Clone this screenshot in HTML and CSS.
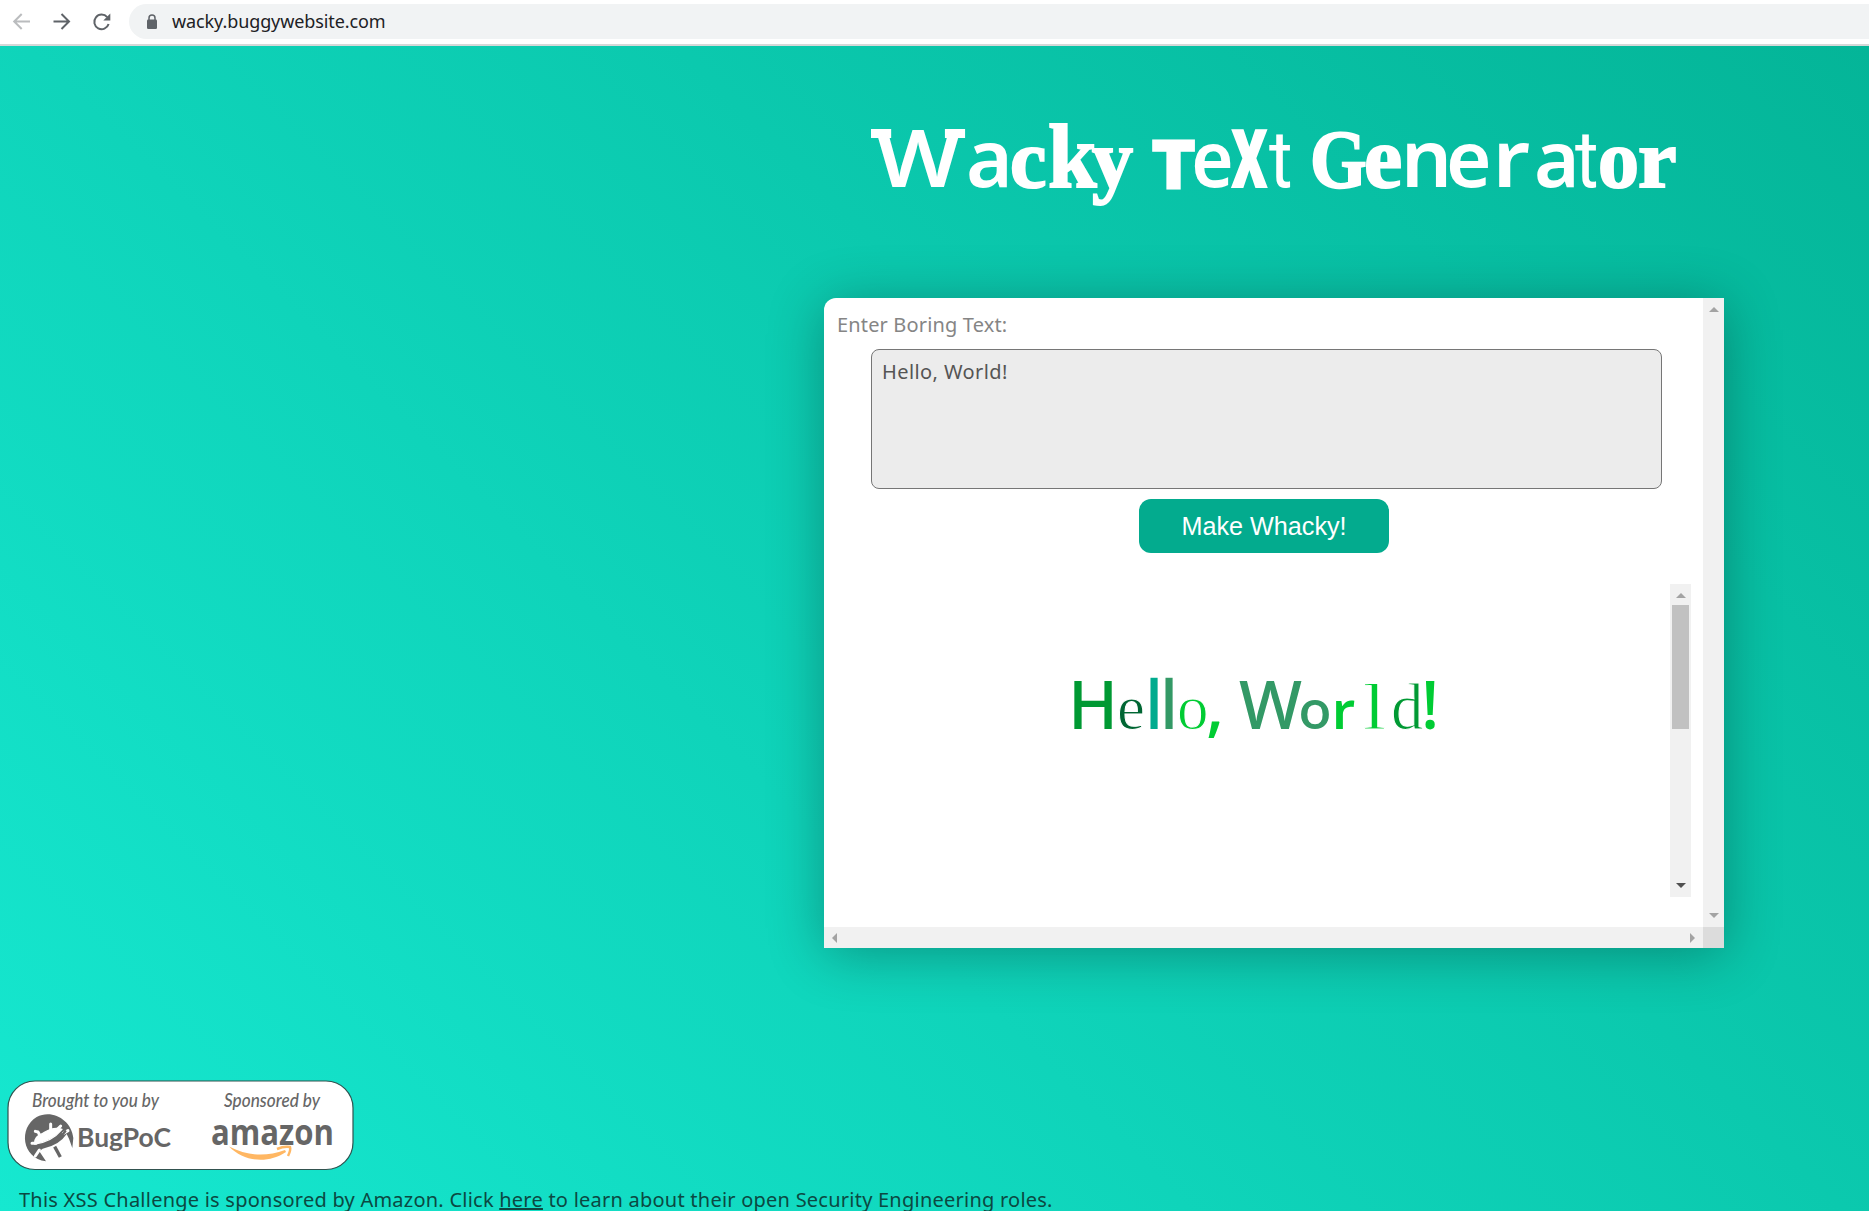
FILE: index.html
```
<!DOCTYPE html>
<html lang="en">
<head>
<meta charset="utf-8">
<title>Wacky Text Generator</title>
<link rel="stylesheet" href="styles.css">
</head>
<body>
<header class="toolbar">
  <svg class="nav" width="112" height="44" viewBox="0 0 112 44" fill="none" stroke-width="2">
    <path d="M30 21.5H14.5M21.7 14l-7.5 7.5 7.5 7.5" stroke="#babcbe"/>
    <path d="M53.5 21.5H69M61.5 14l7.5 7.5-7.5 7.5" stroke="#5f6368"/>
    <path d="M107.2 17.2A7.3 7.3 0 1 0 108.6 24" stroke="#5f6368"/>
    <path d="M110.3 13.500v7h-7z" fill="#5f6368"/>
  </svg>
  <div class="address">
    <svg class="lock" width="12" height="16" viewBox="0 0 12 16"><path d="M3 6V4a3 3 0 0 1 6 0v2" fill="none" stroke="#5f6368" stroke-width="1.500"/><rect x="1" y="5.500" width="10" height="9.500" rx="1.300" fill="#5f6368"/></svg>
    <span class="url">wacky.buggywebsite.com</span>
  </div>
</header>
<main class="page">
  <h1 class="title"><span class="slab t1">W</span><span class="sans t2">a</span><span class="fat t3">c</span><span class="fat t4">k</span><span class="fat t5">y</span><span class="round t6">T</span><span class="sans t7">e</span><span class="black t8">X</span><span class="thin t9">t</span><span class="fat t10">G</span><span class="fat t11">e</span><span class="sans t12">n</span><span class="sans t13">e</span><span class="sans t14">r</span><span class="sans t15">a</span><span class="thin t16">t</span><span class="fat t17">o</span><span class="fat t18">r</span></h1>

  <section class="card">
    <div class="content">
      <label class="label" for="boring">Enter Boring Text:</label>
      <textarea class="input" id="boring">Hello, World!</textarea>
      <button class="make">Make Whacky!</button>
      <div class="output">
        <p class="result"><span class="h1">H</span><span class="h2">e</span><span class="h3">l</span><span class="h4">l</span><span class="h5">o</span><span class="h6">,</span><span class="h7">W</span><span class="h8">o</span><span class="h9">r</span><span class="h10">l</span><span class="h11">d</span><span class="h12">!</span></p>
        <div class="bar inner"><i class="up"></i><b class="thumb"></b><i class="down dark"></i></div>
      </div>
    </div>
    <div class="bar outer"><i class="up"></i><i class="down"></i></div>
    <div class="bar across"><i class="left"></i><i class="right"></i></div>
    <div class="corner"></div>
  </section>

  <footer class="footer">
    <svg class="sponsors" width="347" height="91" viewBox="7 1080 347 91">
      <rect x="8" y="1081" width="345" height="88.500" rx="27" fill="#fff" stroke="#31524f" stroke-width="1.200"/>
      <g fill="#666">
        <text class="script" x="32" y="1107" textLength="127" lengthAdjust="spacingAndGlyphs">Brought to you by</text>
        <text class="script" x="224" y="1107" textLength="96" lengthAdjust="spacingAndGlyphs">Sponsored by</text>
        <text class="bugpoc" x="77" y="1147" textLength="94" lengthAdjust="spacingAndGlyphs">BugPoC</text>
        <text class="amazon" x="211" y="1145" textLength="123" lengthAdjust="spacingAndGlyphs">amazon</text>
      </g>
      <g transform="translate(20 1108) scale(.3333)" fill="none" stroke-linecap="round" stroke-linejoin="round">
        <path d="M78 160C5 150-5 60 50 27C95 2 155 35 160 90L157 120L147 92L140 78Q118 112 68 122L58 130Z" fill="#666"/>
        <path d="M44 108C42 85 60 82 72 74C88 64 105 56 126 64C108 86 78 104 44 108Z" fill="#fff" stroke="#fff" stroke-width="4"/>
        <path d="M62 86L54 72L46 70M92 68V48M112 64L122 54M48 106H36M130 76L144 68M58 126L46 144" stroke="#fff" stroke-width="9"/>
        <path d="M44 118C80 118 112 100 136 70" stroke="#666" stroke-width="7"/>
        <path d="M104 116L121 147" stroke="#666" stroke-width="10" stroke-linecap="butt"/>
      </g>
      <path d="M229 1146.500C247 1156 266 1157 285 1150L286 1152C268 1164 244 1162 229 1146.500Z" fill="#ffb763"/>
      <path d="M277 1149q7-3 13-2 1 3-2 9" fill="none" stroke="#ffb763" stroke-width="2.500"/>
    </svg>
    <p class="note">This XSS Challenge is sponsored by Amazon. Click <a href="#">here</a> to learn about their open Security Engineering roles.</p>
  </footer>
</main>
</body>
</html>
```
FILE: styles.css
```
* { box-sizing: border-box; }
html, body { height: 100%; }
body {
  margin: 0;
  display: flex;
  flex-direction: column;
  overflow: hidden;
  font-family: "Noto Sans", "Open Sans", sans-serif;
}
.toolbar {
  flex: none;
  height: 46px;
  display: flex;
  align-items: flex-start;
  background: #fff;
  border-bottom: 2px solid #d5d8d8;
}
.nav { flex: none; }
.address {
  flex: 1;
  height: 35px;
  margin: 4px 0 0 17px;
  padding-left: 17px;
  display: flex;
  align-items: center;
  background: #f1f3f4;
  border-radius: 18px 0 0 18px;
}
.lock { margin-right: 14px; }
.url { margin-top: -2px; font-size: 18px; color: #202124; letter-spacing: -.1px; }

.page {
  flex: 1;
  min-height: 0;
  display: flex;
  flex-direction: column;
  background: linear-gradient(45deg, #16e8d0 0%, #04b598 100%);
}
.title {
  margin: 55px 0 0 871px;
  height: 197px;
  flex: none;
  display: flex;
  align-items: baseline;
  color: #fff;
  font-size: 80px;
  line-height: 110px;
}
.title span, .result span {
  display: block;
  flex: none;
  white-space: nowrap;
  transform-origin: left;
}
.slab { font-family: "Noto Sans", sans-serif; font-weight: 600; }
/* flat serifs on the outer strokes */
.slab::before, .slab::after {
  content: "";
  display: inline-block;
  width: 18px;
  height: 9px;
  vertical-align: 49px;
  background: #fff;
}
.slab::before { margin-right: -14px; }
.slab::after { margin-left: -14px; }
.sans { font-family: "Noto Sans", sans-serif; font-weight: 600; }
.fat { font-family: "Liberation Serif", serif; font-weight: 700; -webkit-text-stroke: 2px #fff; }
.round { font-family: "Liberation Sans", sans-serif; font-weight: 700; -webkit-text-stroke: 5px #fff; stroke-linejoin: round; }
.black { font-family: Roboto, sans-serif; font-weight: 900; -webkit-text-stroke: 2px #fff; }
.thin { font-family: Roboto, sans-serif; font-weight: 400; }
.t1 { width: 99px; transform: scaleX(1.12); }
.t2 { width: 41px; text-indent: -4px; }
.t3 { width: 37px; font-size: 82px; text-indent: -1px; }
.t4 { width: 44px; font-size: 92px; transform: scaleX(.95); }
.t5 { width: 61px; font-size: 82px; }
.t6 { width: 42px; font-size: 64px; text-indent: 1px; }
.t7 { width: 37px; font-size: 78px; text-indent: -4px; transform: scaleX(.93); }
.t8 { width: 37px; transform: scaleX(.68); }
.t9 { width: 41px; transform: scaleX(.9); }
.t10 { width: 54px; font-size: 82px; transform: scaleX(.89); }
.t11 { width: 43px; font-size: 86px; }
.t12 { width: 43px; text-indent: -6px; }
.t13 { width: 49px; font-size: 78px; text-indent: -4px; }
.t14 { width: 39px; text-indent: -6px; transform: scaleX(1.08); }
.t15 { width: 37px; font-size: 78px; text-indent: -4px; }
.t16 { width: 23px; transform: scaleX(.9); }
.t17 { width: 40px; font-size: 82px; }
.t18 { width: 39px; font-size: 82px; transform: scaleX(1.06); }

.card {
  flex: none;
  width: 900px;
  height: 650px;
  margin-left: 824px;
  display: grid;
  grid-template: 629px 21px / 879px 21px;
  background: #fff;
  border-radius: 12px 0 0 0;
  box-shadow: 0 6px 56px rgba(0, 0, 0, .3);
}
.content { display: flex; flex-direction: column; padding: 10px 12px 0 13px; }
.label { height: 41px; font-size: 20px; line-height: 34px; letter-spacing: .15px; color: #858585; }
.input {
  width: 791px;
  height: 140px;
  margin: 0 0 10px 34px;
  padding: 8px 10px;
  resize: none;
  border: 1px solid #767676;
  border-radius: 8px;
  background: #ececec;
  color: #555;
  font: 20px/28px "Noto Sans", sans-serif;
  letter-spacing: .4px;
}
.make {
  width: 250px;
  height: 54px;
  margin-left: 302px;
  border: 0;
  border-radius: 12px;
  background: #03ab8e;
  color: #fff;
  font: 25.200px "Liberation Sans", sans-serif;
}
.output { height: 313px; margin-top: 31px; display: flex; justify-content: space-between; }
.result {
  margin: 74px 0 0 238px;
  display: flex;
  align-items: baseline;
  height: 100px;
  font-size: 67px;
  font-weight: 500;
  line-height: 90px;
}
.h1 { width: 44px; color: #093; text-indent: -7px; }
.h2, .h5, .h10, .h11 { font-family: "Liberation Serif", serif; font-weight: 400; -webkit-text-stroke: 1px #fff; }
.h2 { width: 32px; color: #063; font-size: 63px; text-indent: -2px; }
.h3 { width: 15px; color: #00ab8e; text-indent: -6px; }
.h4 { width: 13px; color: #396; text-indent: -6px; }
.h5 { width: 28px; color: #0c3; font-size: 63px; text-indent: -2px; }
.h6 { width: 32px; color: #0c3; text-indent: -1px; }
.h7 { width: 63px; color: #396; }
.h8 { width: 34px; color: #396; font-family: Lato, sans-serif; font-weight: 600; font-size: 56px; text-indent: -3px; }
.h9 { width: 28px; color: #0c3; font-weight: 600; font-size: 53px; text-indent: -4px; }
.h10 { width: 29px; color: #0c3; font-size: 65px; text-indent: -1px; transform: scaleX(1.3); }
.h11 { width: 33px; color: #093; font-size: 65px; text-indent: -2px; }
.h12 { width: 12px; color: #0c3; text-indent: -5px; }

.bar { display: flex; flex-direction: column; justify-content: space-between; align-items: center; background: #f1f1f1; }
.bar i { width: 0; height: 0; border: 5px solid transparent; }
.bar .up { border-width: 0 5px 5px; border-bottom-color: #a3a3a3; }
.bar .down { border-width: 5px 5px 0; border-top-color: #a3a3a3; }
.bar .dark { border-top-color: #505050; }
.bar .left { border-width: 5px 5px 5px 0; border-right-color: #a3a3a3; }
.bar .right { border-width: 5px 0 5px 5px; border-left-color: #a3a3a3; }
.outer, .inner { padding: 9px 0; }
.inner { width: 21px; justify-content: flex-start; }
.thumb { width: 17px; height: 124px; margin: 7px 0 auto; background: #c1c1c1; }
.across { flex-direction: row; padding: 0 8px; }
.corner { background: #dcdcdc; }

.footer { margin-top: 132px; padding-left: 7px; }
.sponsors { display: block; }
.script { font: italic 500 20px Lato, sans-serif; }
.bugpoc { font: 700 26px Lato, sans-serif; }
.amazon { font: 700 36px "Open Sans", sans-serif; }
.note { margin: 12px 0 0 12px; white-space: nowrap; font-size: 20px; line-height: 34px; letter-spacing: .235px; color: #0b4942; }
.note a { color: inherit; }
```
